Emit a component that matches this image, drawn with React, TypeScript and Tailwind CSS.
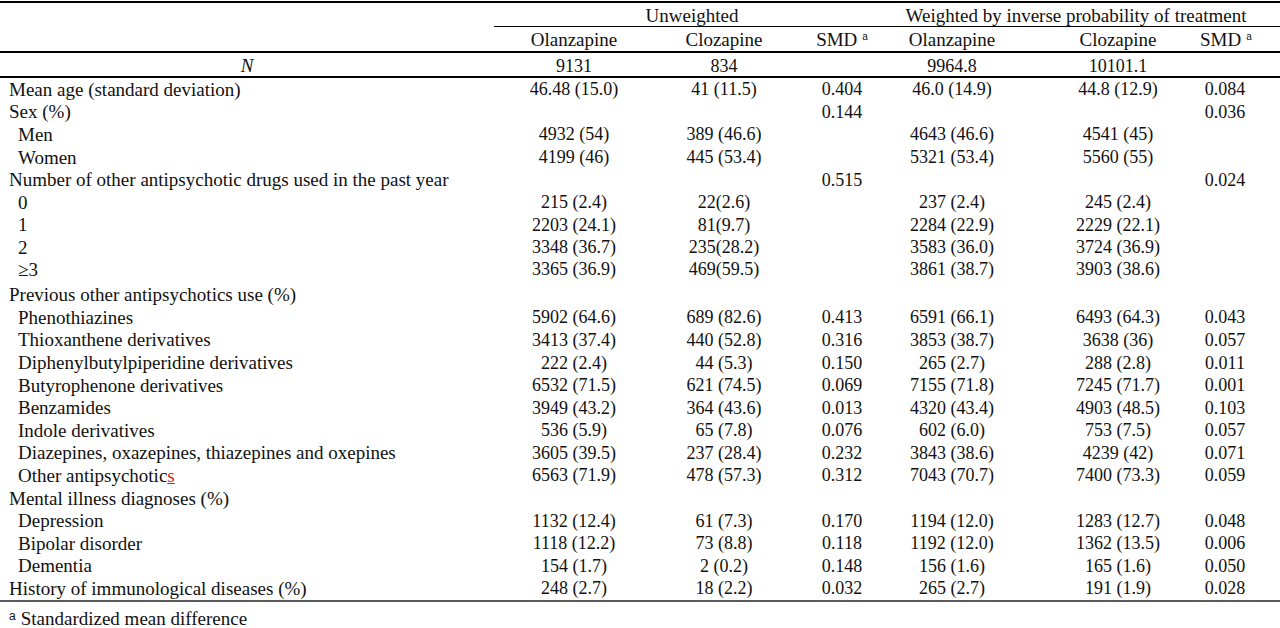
import React from "react";

type Row = { label: string; v: string[]; sub?: boolean; tall?: boolean; red?: boolean };

const rows: Row[] = [
  { label: "Mean age (standard deviation)", v: ["46.48 (15.0)", "41 (11.5)", "0.404", "46.0 (14.9)", "44.8 (12.9)", "0.084"] },
  { label: "Sex (%)", v: ["", "", "0.144", "", "", "0.036"] },
  { label: "Men", sub: true, v: ["4932 (54)", "389 (46.6)", "", "4643 (46.6)", "4541 (45)", ""] },
  { label: "Women", sub: true, v: ["4199 (46)", "445 (53.4)", "", "5321 (53.4)", "5560 (55)", ""] },
  { label: "Number of other antipsychotic drugs used in the past year", v: ["", "", "0.515", "", "", "0.024"] },
  { label: "0", sub: true, v: ["215 (2.4)", "22(2.6)", "", "237 (2.4)", "245 (2.4)", ""] },
  { label: "1", sub: true, v: ["2203 (24.1)", "81(9.7)", "", "2284 (22.9)", "2229 (22.1)", ""] },
  { label: "2", sub: true, v: ["3348 (36.7)", "235(28.2)", "", "3583 (36.0)", "3724 (36.9)", ""] },
  { label: "≥3", sub: true, tall: true, v: ["3365 (36.9)", "469(59.5)", "", "3861 (38.7)", "3903 (38.6)", ""] },
  { label: "Previous other antipsychotics use (%)", v: ["", "", "", "", "", ""] },
  { label: "Phenothiazines", sub: true, v: ["5902 (64.6)", "689 (82.6)", "0.413", "6591 (66.1)", "6493 (64.3)", "0.043"] },
  { label: "Thioxanthene derivatives", sub: true, v: ["3413 (37.4)", "440 (52.8)", "0.316", "3853 (38.7)", "3638 (36)", "0.057"] },
  { label: "Diphenylbutylpiperidine derivatives", sub: true, v: ["222 (2.4)", "44 (5.3)", "0.150", "265 (2.7)", "288 (2.8)", "0.011"] },
  { label: "Butyrophenone derivatives", sub: true, v: ["6532 (71.5)", "621 (74.5)", "0.069", "7155 (71.8)", "7245 (71.7)", "0.001"] },
  { label: "Benzamides", sub: true, v: ["3949 (43.2)", "364 (43.6)", "0.013", "4320 (43.4)", "4903 (48.5)", "0.103"] },
  { label: "Indole derivatives", sub: true, v: ["536 (5.9)", "65 (7.8)", "0.076", "602 (6.0)", "753 (7.5)", "0.057"] },
  { label: "Diazepines, oxazepines, thiazepines and oxepines", sub: true, v: ["3605 (39.5)", "237 (28.4)", "0.232", "3843 (38.6)", "4239 (42)", "0.071"] },
  { label: "Other antipsychotic", red: true, sub: true, v: ["6563 (71.9)", "478 (57.3)", "0.312", "7043 (70.7)", "7400 (73.3)", "0.059"] },
  { label: "Mental illness diagnoses (%)", v: ["", "", "", "", "", ""] },
  { label: "Depression", sub: true, v: ["1132 (12.4)", "61 (7.3)", "0.170", "1194 (12.0)", "1283 (12.7)", "0.048"] },
  { label: "Bipolar disorder", sub: true, v: ["1118 (12.2)", "73 (8.8)", "0.118", "1192 (12.0)", "1362 (13.5)", "0.006"] },
  { label: "Dementia", sub: true, v: ["154 (1.7)", "2 (0.2)", "0.148", "156 (1.6)", "165 (1.6)", "0.050"] },
  { label: "History of immunological diseases (%)", v: ["248 (2.7)", "18 (2.2)", "0.032", "265 (2.7)", "191 (1.9)", "0.028"] },
];

const grid = "grid grid-cols-[494px_160px_140px_96px_124px_186px_50px]";
const cellPad = ["", "", "", "", "", "pl-[22px]", ""];

function Sup() {
  return (
    <span className="text-[10px] relative -top-[6px] ml-[5px]" style={{ fontFamily: '"Liberation Sans", Arial, sans-serif' }}>
      a
    </span>
  );
}

export default function App() {
  return (
    <div
      className="w-[1280px] h-[628px] bg-white text-[#111] text-[19px] overflow-hidden"
      style={{ fontFamily: '"Liberation Serif", "Times New Roman", serif' }}
    >
      <div className="pt-[1px]">
        {/* header row 1 */}
        <div className="flex h-[26px] border-t-2 border-black">
          <div className="w-[494px]" />
          <div className="flex-1 border-b border-black">
            <div className="grid grid-cols-[396px_360px] h-full items-center">
              <div className="text-center leading-none pt-[2px]">Unweighted</div>
              <div className="text-center leading-none pt-[2px] pl-[12px]">Weighted by inverse probability of treatment</div>
            </div>
          </div>
        </div>
        {/* header row 2 */}
        <div className={`${grid} h-[26px] items-center border-b-2 border-black leading-none whitespace-nowrap`}>
          <div />
          <div className="text-center">Olanzapine</div>
          <div className="text-center">Clozapine</div>
          <div className="text-center">
            SMD<Sup />
          </div>
          <div className="text-center">Olanzapine</div>
          <div className="text-center pl-[22px]">Clozapine</div>
          <div className="text-center">
            SMD<Sup />
          </div>
        </div>
        {/* N row */}
        <div className={`${grid} h-[25px] items-center border-b-2 border-black leading-none pt-[2px] text-[18px]`}>
          <div className="text-center italic text-[19px]">N</div>
          <div className="text-center">9131</div>
          <div className="text-center">834</div>
          <div />
          <div className="text-center">9964.8</div>
          <div className="text-center pl-[22px]">10101.1</div>
          <div />
        </div>
        {/* data rows */}
        <div className="border-b-2 border-[#5a5a5a]">
          {rows.map((r, i) => (
            <div
              key={i}
              className={`${grid} ${r.tall ? "h-[24.7px] items-start pt-[1px]" : "h-[22.6px] items-center"} leading-none whitespace-nowrap`}
            >
              <div className={r.sub ? "pl-[18px]" : "pl-[9px]"}>
                {r.label}
                {r.red && <span className="text-[#d21f1f] underline decoration-[#d21f1f]">s</span>}
              </div>
              {r.v.map((c, j) => (
                <div key={j} className={`text-center text-[18px] ${cellPad[j + 1]}`}>
                  {c}
                </div>
              ))}
            </div>
          ))}
        </div>
        <div className="pl-[9px] pt-[7px] leading-[19px] whitespace-nowrap">
          <span className="text-[12px] relative -top-[5px] mr-[5px]" style={{ fontFamily: '"Liberation Sans", Arial, sans-serif' }}>
            a
          </span>
          Standardized mean difference
        </div>
      </div>
    </div>
  );
}
